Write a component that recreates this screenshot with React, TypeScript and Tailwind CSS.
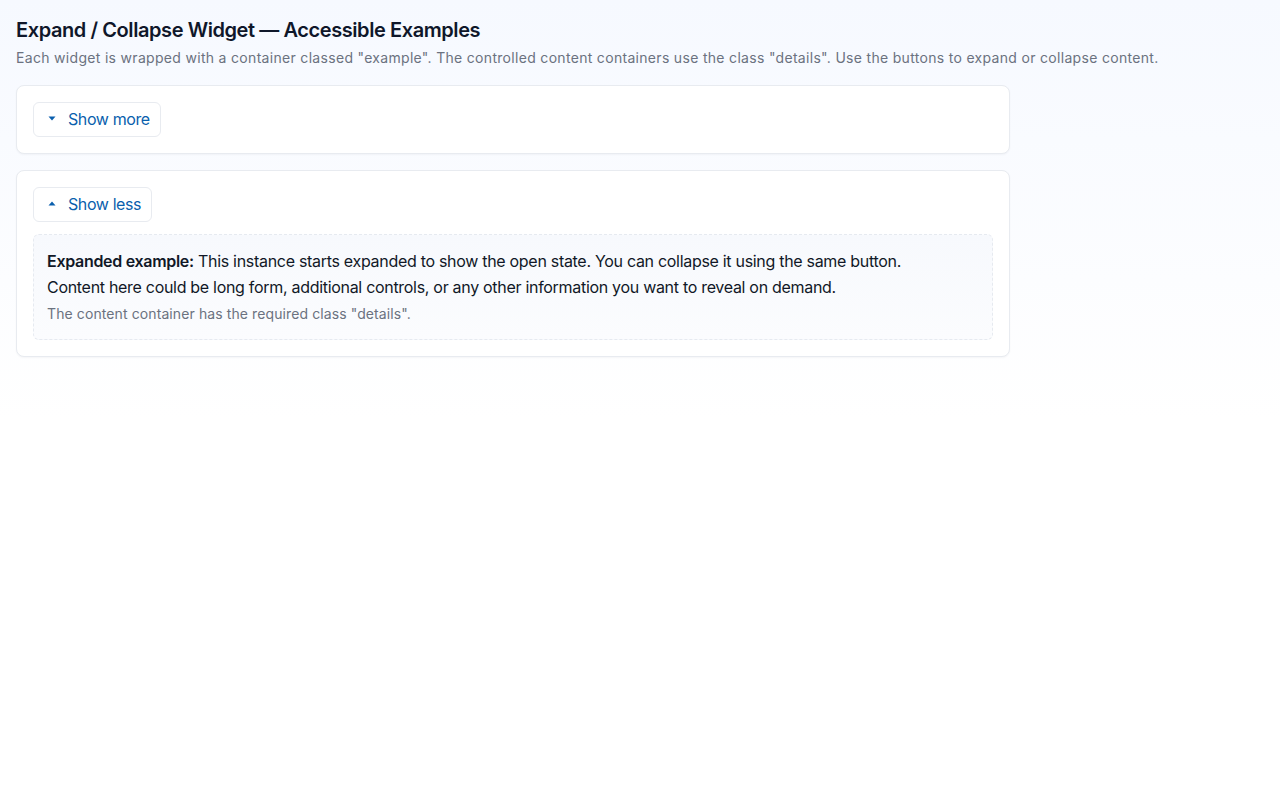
import { useState } from "react";

function Caret({ open }: { open: boolean }) {
  return (
    <svg width="8" height="5" viewBox="0 0 8 5" aria-hidden="true" className={open ? "rotate-180" : ""}>
      <path d="M0.5 0.5h7L4 4.5z" fill="currentColor" />
    </svg>
  );
}

function Example({
  id,
  initialOpen,
  children,
}: {
  id: string;
  initialOpen?: boolean;
  children: React.ReactNode;
}) {
  const [open, setOpen] = useState(!!initialOpen);
  return (
    <div className="example w-[994px] rounded-lg border border-[#e8ebf0] bg-white p-4 shadow-[0_1px_2px_rgba(15,23,42,0.04)]">
      <button
        type="button"
        aria-expanded={open}
        aria-controls={id}
        onClick={() => setOpen(!open)}
        className="flex h-[35px] items-center gap-[12px] rounded-md border border-[#e8ebf0] bg-white pb-[2px] pl-[14px] pr-[10px] text-base tracking-[-0.4px] text-[#0a5fad]"
      >
        <Caret open={open} />
        <span>{open ? "Show less" : "Show more"}</span>
      </button>
      {open && (
        <div
          id={id}
          className="details mt-3 rounded-md border border-dashed border-[#e6eaf0] bg-[linear-gradient(180deg,#f7f9fd,#fbfcfe)] px-[13px] pt-[13px] pb-[15px]"
        >
          {children}
        </div>
      )}
    </div>
  );
}

export default function App() {
  return (
    <div
      className="min-h-screen bg-[linear-gradient(180deg,#f6f9ff_0px,#ffffff_420px)] p-4 text-[#111827]"
      style={{ fontFamily: "Inter, 'Noto Sans', sans-serif" }}
    >
      <h1 className="text-xl leading-7 font-semibold tracking-[-0.42px] text-[#0f172a]">
        Expand / Collapse Widget — Accessible Examples
      </h1>
      <p className="mt-1 mb-[17px] text-sm leading-5 tracking-[0.31px] text-[#6b7280]">
        Each widget is wrapped with a container classed "example". The controlled content containers use the class "details". Use the buttons to expand or collapse content.
      </p>
      <div className="flex flex-col gap-4">
        <Example id="details-1">
          <p className="text-base leading-[26px]">Hidden content.</p>
        </Example>
        <Example id="details-2" initialOpen>
          <p className="text-base leading-[26px] tracking-[-0.3px] text-[#111827]">
            <strong className="font-semibold">Expanded example:</strong> This instance starts expanded to show the open state. You can collapse it using the same button.
            <br />
            Content here could be long form, additional controls, or any other information you want to reveal on demand.
          </p>
          <p className="mt-[4px] text-sm leading-5 tracking-[0.1px] text-[#6b7280]">The content container has the required class "details".</p>
        </Example>
      </div>
    </div>
  );
}
